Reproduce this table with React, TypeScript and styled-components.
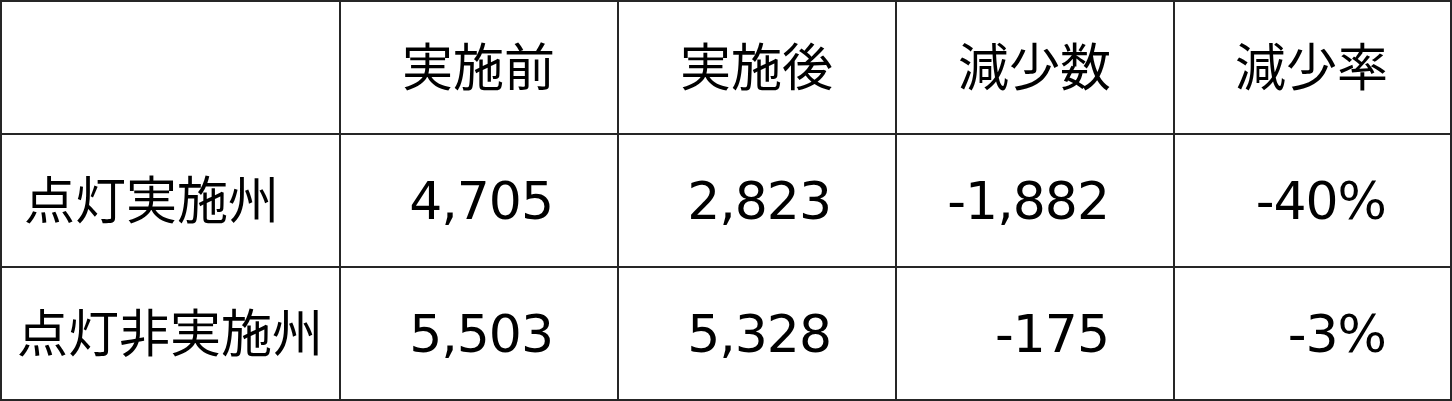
import React from 'react'
import styled, { createGlobalStyle } from 'styled-components'

const GlobalStyle = createGlobalStyle`
  html, body {
    margin: 0;
    padding: 0;
    background: #fff;
  }
`

// grid lines come from the dark background showing through the gaps
const Grid = styled.div`
  display: grid;
  grid-template-columns: 337px repeat(3, 276px) 275px;
  grid-template-rows: repeat(3, 131px);
  gap: 2px;
  padding: 2px;
  width: 1452px;
  box-sizing: border-box;
  background: #262626;
  color: #000;
`

const Cell = styled.div`
  display: flex;
  align-items: center;
  background: #fff;
  white-space: nowrap;
  line-height: 1;
`

const LabelCell = styled(Cell)<{ $indent: number }>`
  padding-left: ${(p) => p.$indent}px;
  padding-bottom: 6px;
  font-family: 'Noto Sans CJK JP', sans-serif;
  font-size: 51px;
`

const HeadCell = styled(Cell)`
  justify-content: flex-end;
  padding-right: 62px;
  padding-bottom: 6px;
  font-family: 'Noto Sans CJK JP', sans-serif;
  font-size: 51px;
`

const NumCell = styled(Cell)`
  justify-content: flex-end;
  padding-right: 64px;
  font-family: 'DejaVu Sans', 'Noto Sans CJK JP', sans-serif;
  font-size: 52px;
  letter-spacing: -1px;
`

const headers = ['実施前', '実施後', '減少数', '減少率']

const rows = [
  { label: '点灯実施州', indent: 22, values: ['4,705', '2,823', '-1,882', '-40%'] },
  { label: '点灯非実施州', indent: 15, values: ['5,503', '5,328', '-175', '-3%'] },
]

export default function App() {
  return (
    <>
      <GlobalStyle />
      <Grid>
        <LabelCell $indent={0} />
        {headers.map((h) => (
          <HeadCell key={h}>{h}</HeadCell>
        ))}
        {rows.map((r) => (
          <React.Fragment key={r.label}>
            <LabelCell $indent={r.indent}>{r.label}</LabelCell>
            {r.values.map((v, i) => (
              <NumCell key={i}>{v}</NumCell>
            ))}
          </React.Fragment>
        ))}
      </Grid>
    </>
  )
}
